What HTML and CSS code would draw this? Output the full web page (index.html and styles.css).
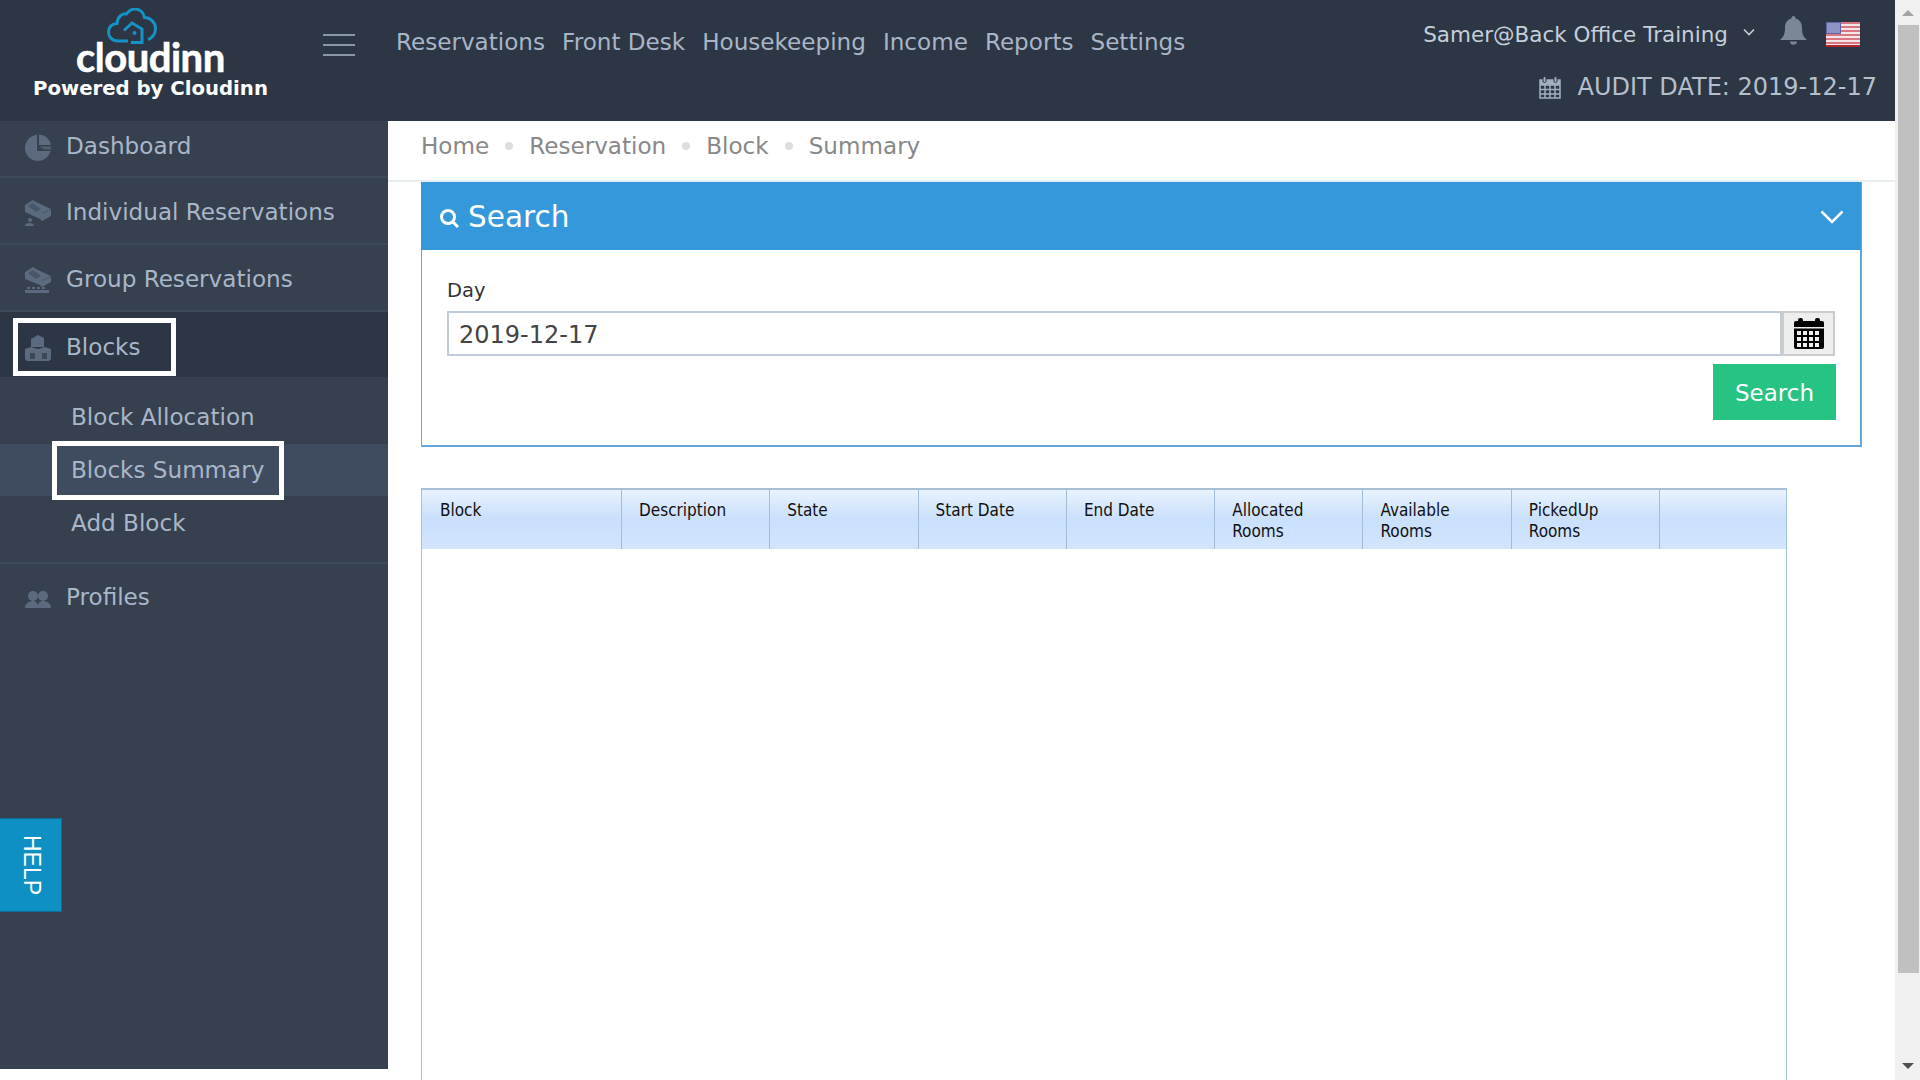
FILE: index.html
```html
<!DOCTYPE html>
<html lang="en">
<head>
  <meta charset="UTF-8">
  <title>Blocks Summary</title>
  <link rel="stylesheet" href="styles.css">
</head>
<body>
  <div class="page">
    <div class="main">
      <header class="topbar">
        <div class="brand">
          <svg class="brand-cloud" viewBox="0 0 50 36" width="50" height="36">
            <path d="M21 33H11C5 33 1.500 29 1.500 24C1.500 19 5 15.500 10 15.500C10.500 9 15 5 19.500 6C22 2.500 25 1 28 1C33 1 36.500 4.500 37.500 9.500C43 9.500 48.500 14 48.500 20.500C48.500 26 45 30 41 31.500" fill="none" stroke="#1593c6" stroke-width="3"/>
            <path d="M17 22.500L25 15L35 21V34.500H24" fill="none" stroke="#1593c6" stroke-width="3"/>
            <circle cx="27.500" cy="25" r="2" fill="#1593c6"/>
          </svg>
          <div class="brand-name">cloudinn</div>
          <div class="brand-sub">Powered by Cloudinn</div>
        </div>
        <div class="burger"><span></span><span></span><span></span></div>
        <nav class="topnav">
          <a href="#">Reservations</a>
          <a href="#">Front Desk</a>
          <a href="#">Housekeeping</a>
          <a href="#">Income</a>
          <a href="#">Reports</a>
          <a href="#">Settings</a>
        </nav>
        <div class="top-right">
          <div class="user-row">
            <span class="user-name">Samer@Back Office Training</span>
            <svg class="user-caret" viewBox="0 0 12 8" width="12" height="8"><path d="M1 1.500L6 6.500L11 1.500" fill="none" stroke="#c5cfdb" stroke-width="1.600"/></svg>
            <svg class="bell" viewBox="0 0 27 29" width="27" height="29">
              <path d="M13.500 0C15 0 15.500 1 15.500 2.500C20 3.500 22 7 22 12C22 18 23.500 21 27 24H0C3.500 21 5 18 5 12C5 7 7 3.500 11.500 2.500C11.500 1 12 0 13.500 0Z" fill="#7b8797"/>
              <path d="M10 25.500H17C17 27.500 15.500 28.800 13.500 28.800C11.500 28.800 10 27.500 10 25.500Z" fill="#7b8797"/>
            </svg>
            <svg class="flag" viewBox="0 0 34 25" width="34" height="25">
              <rect width="34" height="25" fill="#f3e6e8"/>
              <rect y="0" width="34" height="2" fill="#d9767f"/>
              <rect y="4" width="34" height="2" fill="#d9767f"/>
              <rect y="8" width="34" height="2" fill="#d9767f"/>
              <rect y="12" width="34" height="2" fill="#d9767f"/>
              <rect y="16" width="34" height="2" fill="#d9767f"/>
              <rect y="20" width="34" height="2" fill="#d9767f"/>
              <rect y="23" width="34" height="2" fill="#b3242f"/>
              <rect width="15" height="12" fill="#5d63ad"/>
              <rect x="1" y="1" width="13" height="10" fill="#8f94c7"/>
            </svg>
          </div>
          <div class="audit-row">
            <svg class="audit-icon" viewBox="0 0 22 23" width="22" height="23">
              <path d="M1 4H21V22H1Z M1 9H21 M1 13.500H21 M1 18H21 M6 9V22 M11 9V22 M16 9V22" fill="none" stroke="#a3afc0" stroke-width="1.500"/>
              <rect x="1" y="4" width="20" height="5" fill="#a3afc0"/>
              <rect x="4" y="0.500" width="3" height="6" rx="1.500" fill="#a3afc0" stroke="#2c3644"/>
              <rect x="15" y="0.500" width="3" height="6" rx="1.500" fill="#a3afc0" stroke="#2c3644"/>
            </svg>
            <span>AUDIT DATE: 2019-12-17</span>
          </div>
        </div>
      </header>

      <div class="layout">
        <aside class="sidebar">
          <a class="side-item side-first" href="#">
            <svg class="side-icon icon-pie" viewBox="0 0 26 27" width="26" height="27">
              <path d="M12 1A13 13 0 1 0 25.500 17H12Z" fill="#5b6a7e"/>
              <path d="M14 0.500A12.500 12.500 0 0 1 26 11H14Z" fill="#5b6a7e"/>
              <path d="M14.500 12.500H26V15.500H19.500Z" fill="#505e71"/>
            </svg>
            <span>Dashboard</span>
          </a>
          <a class="side-item side-bed" href="#">
            <svg class="side-icon" viewBox="0 0 26 26" width="26" height="26">
              <path d="M0 5L8 0L11 2L26 9V16L17 21L15 19L0 12Z" fill="#5b6a7e"/>
              <path d="M3 6L8 3L16 9L11 12Z" fill="#48566a"/>
              <path d="M17 13L26 9V10L17 14Z" fill="#48566a"/>
              <circle cx="5" cy="20" r="2" fill="#5b6a7e"/>
              <path d="M0 26C0 22 9 22 9 26Z" fill="#5b6a7e"/>
            </svg>
            <span>Individual Reservations</span>
          </a>
          <a class="side-item side-bed" href="#">
            <svg class="side-icon" viewBox="0 0 26 26" width="26" height="26">
              <path d="M0 5L8 0L11 2L26 9V15L17 20L15 18L0 12Z" fill="#5b6a7e"/>
              <path d="M3 6L8 3L16 9L11 12Z" fill="#48566a"/>
              <path d="M17 13L26 9V10L17 14Z" fill="#48566a"/>
              <path d="M2 20H5V22H2Z M7 20H10V22H7Z M12 20H15V22H12Z M17 20H20V22H17Z M0 23H24V26H0Z" fill="#5b6a7e"/>
            </svg>
            <span>Group Reservations</span>
          </a>
          <div class="side-item side-active">
            <div class="side-focus">
              <svg class="side-icon" viewBox="0 0 26 27" width="26" height="27">
                <path d="M6 5L13 1L19 4V13H6Z" fill="#5b6a7e"/>
                <path d="M0 15L6 13L13 15V27H2L0 25Z M13 15L20 13L26 15V25L24 27H13Z" fill="#5b6a7e"/>
                <path d="M5 19H10V25H5Z M17 19H22V25H17Z" fill="#3c4857"/>
              </svg>
              <span>Blocks</span>
            </div>
          </div>
          <div class="side-sub">
            <a class="sub-link sub-above" href="#"><span class="sub-text">Block Allocation</span></a>
            <a class="sub-link sub-current" href="#"><span class="sub-text sub-focus">Blocks Summary</span></a>
            <a class="sub-link sub-below" href="#"><span class="sub-text">Add Block</span></a>
          </div>
          <a class="side-item side-last" href="#">
            <svg class="side-icon icon-people" viewBox="0 0 26 18" width="26" height="18">
              <circle cx="8" cy="6" r="5" fill="#5b6a7e"/>
              <circle cx="18" cy="6" r="5" fill="#5b6a7e"/>
              <path d="M0 18C0 12 6 11 8 11C10 11 13 12 13 18Z M12 18C13 12 16 11 18 11C20 11 26 12 26 18Z" fill="#5b6a7e"/>
            </svg>
            <span>Profiles</span>
          </a>
          <div class="help-tab"><span>HELP</span></div>
        </aside>

        <section class="content">
          <div class="crumbs">
            <a href="#">Home</a><i></i>
            <a href="#">Reservation</a><i></i>
            <a href="#">Block</a><i></i>
            <a href="#">Summary</a>
          </div>

          <div class="panel">
            <div class="panel-head">
              <svg class="panel-search" viewBox="0 0 20 20" width="20" height="20">
                <circle cx="9" cy="9" r="6.500" fill="none" stroke="#fff" stroke-width="3"/>
                <path d="M13.500 13.500L19 19" stroke="#fff" stroke-width="3"/>
              </svg>
              <span class="panel-title">Search</span>
              <svg class="panel-caret" viewBox="0 0 24 14" width="24" height="14"><path d="M1.500 1.500L12 12L22.500 1.500" fill="none" stroke="#fff" stroke-width="2.500"/></svg>
            </div>
            <div class="panel-body">
              <label class="field-label" for="day">Day</label>
              <div class="field-row">
                <input class="field-input" id="day" type="text" value="2019-12-17">
                <div class="field-addon">
                  <svg viewBox="0 0 30 31" width="30" height="31">
                    <rect x="0" y="3" width="30" height="28" rx="2" fill="#000"/>
                    <rect x="4" y="0" width="5" height="6" rx="2" fill="#000"/>
                    <rect x="21" y="0" width="5" height="6" rx="2" fill="#000"/>
                    <rect x="0" y="9" width="30" height="1.500" fill="#eee"/>
                    <path d="M3 13h4v4h-4z M9 13h4v4h-4z M15 13h4v4h-4z M21 13h4v4h-4z M3 19h4v4h-4z M9 19h4v4h-4z M15 19h4v4h-4z M21 19h4v4h-4z M3 25h4v4h-4z M9 25h4v4h-4z M15 25h4v4h-4z M21 25h4v4h-4z" fill="#eee"/>
                  </svg>
                </div>
              </div>
              <div class="panel-actions"><button class="btn-search" type="button">Search</button></div>
            </div>
          </div>

          <div class="grid-wrap">
            <table class="grid">
              <colgroup>
                <col class="col-first"><col class="col-mid"><col class="col-mid"><col class="col-mid"><col class="col-mid"><col class="col-mid"><col class="col-mid"><col class="col-mid"><col class="col-last">
              </colgroup>
              <thead>
                <tr>
                  <th>Block</th>
                  <th>Description</th>
                  <th>State</th>
                  <th>Start Date</th>
                  <th>End Date</th>
                  <th>Allocated<br>Rooms</th>
                  <th>Available<br>Rooms</th>
                  <th>PickedUp<br>Rooms</th>
                  <th></th>
                </tr>
              </thead>
              <tbody></tbody>
            </table>
          </div>
        </section>
      </div>
    </div>

    <div class="scrollbar">
      <div class="scroll-up"></div>
      <div class="scroll-thumb"></div>
      <div class="scroll-down"></div>
    </div>
  </div>
</body>
</html>
```

FILE: styles.css
```css
* {
  box-sizing: border-box;
}

html, body {
  margin: 0;
  height: 1080px;
  overflow: hidden;
  background-color: #fff;
  font-family: "DejaVu Sans", Verdana, sans-serif;
}

a {
  color: inherit;
  text-decoration: none;
}

.page {
  display: flex;
  height: 1080px;
}

.main {
  flex: 1;
  min-width: 0;
  display: flex;
  flex-direction: column;
}

/* Top bar */
.topbar {
  display: flex;
  height: 121px;
  background-color: #2c3644;
  flex-shrink: 0;
}

.brand {
  width: 323px;
  flex-shrink: 0;
  display: flex;
  flex-direction: column;
  padding-top: 8px;
}

.brand-cloud {
  display: block;
  margin-left: 107px;
  flex-shrink: 0;
}

.brand-name {
  margin: -1px 0 0 76px;
  font-family: Lato, sans-serif;
  font-weight: 700;
  font-size: 40px;
  line-height: 28px;
  letter-spacing: -0.5px;
  color: #fff;
  -webkit-text-stroke: 0.6px #fff;
}

.brand-sub {
  margin: 7px 0 0 33px;
  font-weight: 700;
  font-size: 19.700px;
  line-height: 22px;
  color: #fff;
  white-space: nowrap;
}

.burger {
  width: 32px;
  flex-shrink: 0;
  padding-top: 34px;
  display: flex;
  flex-direction: column;
  gap: 8px;
}

.burger span {
  display: block;
  height: 2px;
  background-color: #8a97a8;
}

.topnav {
  margin-left: 41px;
  padding-top: 28px;
  display: flex;
  gap: 17px;
  font-size: 23.100px;
  line-height: 28px;
  color: #a9b5c6;
  white-space: nowrap;
}

.top-right {
  flex: 1;
  display: flex;
  flex-direction: column;
  align-items: flex-end;
  padding-top: 17px;
  padding-right: 18px;
}

.user-row {
  display: flex;
  align-items: center;
  height: 30px;
  padding-right: 17px;
  font-size: 21.500px;
  color: #c5cfdb;
  white-space: nowrap;
}

.user-name {
  margin-top: 4px;
}

.user-caret {
  margin-left: 15px;
}

.bell {
  margin-left: 25px;
  margin-top: -4px;
}

.flag {
  margin-left: 19px;
  margin-top: 4px;
}

.audit-row {
  display: flex;
  align-items: center;
  gap: 17px;
  margin-top: 25px;
  font-size: 24px;
  line-height: 30px;
  color: #b5bfcc;
  white-space: nowrap;
}

/* Sidebar */
.layout {
  display: flex;
  flex: 1;
  min-height: 0;
}

.sidebar {
  width: 388px;
  height: 948px;
  flex-shrink: 0;
  background-color: #36404f;
  color: #a9b6c8;
  font-size: 23.100px;
  line-height: 24px;
  position: relative;
}

.side-item {
  display: flex;
  align-items: center;
  gap: 15px;
  height: 67px;
  padding-left: 25px;
  border-bottom: 2px solid #3e4958;
}

.side-first {
  height: 57px;
  padding-bottom: 6px;
}

.icon-pie {
  margin-top: 3px;
}

.side-bed {
  padding-top: 2px;
}

.side-bed .side-icon {
  margin-top: 3px;
}

.side-active {
  height: 65px;
  padding: 6px 0 1px 13px;
  background-color: #2c3644;
  border-bottom: none;
}

.side-focus {
  display: flex;
  align-items: center;
  gap: 15px;
  width: 163px;
  height: 58px;
  padding-left: 7px;
  border: 5px solid #fff;
}

.side-last {
  border-bottom: none;
  padding-bottom: 2px;
}

.icon-people {
  margin-top: 4px;
}

.side-sub {
  padding: 15px 0;
  border-bottom: 2px solid #3e4958;
  height: 187px;
}

.sub-link {
  display: flex;
  align-items: center;
  height: 52px;
  padding-left: 71px;
}

.sub-above {
  padding-bottom: 2px;
}

.sub-below {
  padding-top: 2px;
}

.sub-current {
  padding-left: 52px;
  background-color: #3f4b5e;
}

.sub-focus {
  display: flex;
  align-items: center;
  width: 232px;
  height: 59px;
  margin: 0;
  padding-left: 14px;
  border: 5px solid #fff;
  white-space: nowrap;
}

.help-tab {
  position: absolute;
  left: 0;
  top: 697px;
  width: 62px;
  height: 94px;
  display: flex;
  align-items: center;
  justify-content: flex-end;
  padding-right: 18px;
  background-color: #0f90c4;
  border: 1px solid #0d6d96;
  border-left: none;
  color: #fff;
  font-family: "Liberation Sans", Arial, sans-serif;
  font-size: 23px;
}

.help-tab span {
  writing-mode: vertical-rl;
  line-height: 22px;
}

/* Content */
.content {
  flex: 1;
  min-width: 0;
}

.crumbs {
  display: flex;
  align-items: center;
  height: 61px;
  padding: 0 0 10px 33px;
  border-bottom: 2px solid #e8edf2;
  font-size: 23.100px;
  color: #888;
  white-space: nowrap;
}

.crumbs i {
  width: 8px;
  height: 8px;
  margin: 0 16px;
  border-radius: 50%;
  background-color: #ddd;
}

.panel {
  margin: 0 33px 41px 33px;
  height: 265px;
  border-left: 1px solid #62a8dd;
  border-right: 2px solid #62a8dd;
  border-bottom: 2px solid #62a8dd;
}

.panel-head {
  display: flex;
  align-items: center;
  height: 68px;
  margin-left: -1px;
  margin-right: -1px;
  padding: 0 17px 0 18px;
  background-color: #3498db;
  color: #fff;
}

.panel-search {
  margin-top: 4px;
}

.panel-title {
  flex: 1;
  margin-left: 9px;
  margin-top: 1px;
  font-size: 29.500px;
}

.panel-caret {
  margin-top: 1px;
}

.panel-body {
  padding: 29px 24px 0 25px;
}

.field-label {
  display: block;
  font-size: 19.500px;
  line-height: 24px;
  color: #333;
}

.field-row {
  display: flex;
  height: 45px;
  margin: 8px 1px 0 0;
}

.field-input {
  flex: 1;
  min-width: 0;
  height: 45px;
  padding: 2px 10px 0;
  border: 2px solid #c0cad8;
  border-radius: 0;
  outline: none;
  font-family: "DejaVu Sans", Verdana, sans-serif;
  font-size: 24px;
  color: #444;
}

.field-addon {
  width: 53px;
  display: flex;
  align-items: center;
  justify-content: center;
  background-color: #eee;
  border: 2px solid #ccc;
}

.panel-actions {
  display: flex;
  justify-content: flex-end;
  margin-top: 8px;
}

.btn-search {
  width: 123px;
  height: 56px;
  padding: 2px 0 0;
  border: none;
  background-color: #27c382;
  color: #fff;
  font-family: "DejaVu Sans", Verdana, sans-serif;
  font-size: 23px;
}

.grid-wrap {
  width: 1366px;
  height: 700px;
  margin-left: 33px;
  border: 1px solid #a5c2dc;
  border-top: 2px solid #a6bfd6;
}

.grid {
  width: 1364px;
  border-collapse: collapse;
  table-layout: fixed;
  font-family: "DejaVu Sans Condensed", "DejaVu Sans", sans-serif;
  font-size: 17px;
  line-height: 21px;
  color: #111;
}

.col-first {
  width: 199.500px;
}

.col-mid {
  width: 148.300px;
}

.col-last {
  width: 126.400px;
}

.grid th {
  height: 59px;
  padding: 10px 0 7px 17px;
  text-align: left;
  vertical-align: top;
  font-weight: 400;
  white-space: nowrap;
  border-right: 1px solid #a3bdd8;
  background-image: linear-gradient(#e8f2fd, #c9dffb 50%, #d2e5fd);
}

.grid th:first-child {
  padding-left: 18px;
}

.grid th:last-child {
  border-right: none;
}

/* Drawn page scrollbar */
.scrollbar {
  width: 25px;
  height: 1080px;
  flex-shrink: 0;
  display: flex;
  flex-direction: column;
  align-items: center;
  background-color: #f0f0f0;
  padding-left: 1px;
}

.scroll-up {
  width: 0;
  height: 0;
  margin-top: 10px;
  border: 6px solid transparent;
  border-top: none;
  border-bottom: 6px solid #a3a3a3;
}

.scroll-thumb {
  width: 21px;
  height: 948px;
  margin-top: 9px;
  background-color: #c0c0c0;
}

.scroll-down {
  width: 0;
  height: 0;
  margin-top: 90px;
  border: 6px solid transparent;
  border-bottom: none;
  border-top: 6px solid #505050;
}
```
